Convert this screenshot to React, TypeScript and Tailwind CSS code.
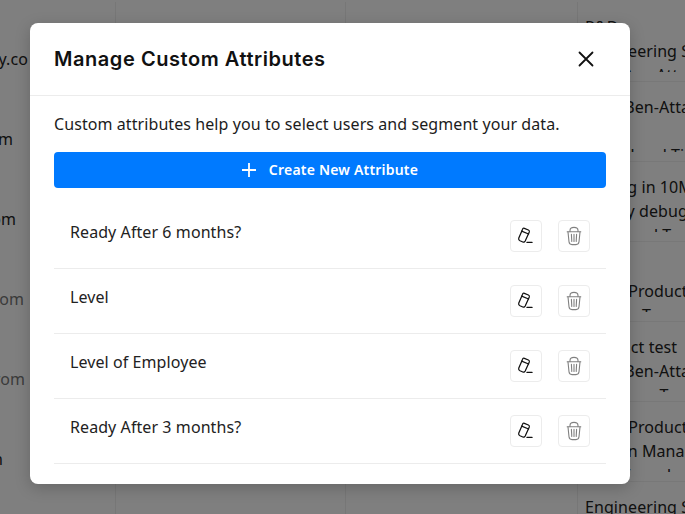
const sans = "font-['Noto_Sans',sans-serif]";

const leftCells = [
  { text: "y.co", cls: "pr-[87px]" },
  { text: "m", cls: "pr-[102px]" },
  { text: "om", cls: "pr-[99px]" },
  { text: "om", cls: "pr-[91px] text-[#777]" },
  { text: "rom", cls: "pr-[90px] text-[#777]" },
  { text: "n", cls: "pr-[112px]" },
];

const rightCells = [
  ["R&D", "Engineering Services", "Yoni Ben-Attar Team"],
  ["Dina Ben-Attar", "", "Team Lead Ti"],
  ["Tuning in 10Min", "Timely debug it", "Yoni Lead Team"],
  ["", "Sales Product", "Design Team"],
  ["Product test", "Dina Ben-Attar", "Marcoms Team"],
  ["Sales Product", "Design Manager", "Yoni Team Lead"],
  ["Engineering Services", "", ""],
];

const attributes = [
  "Ready After 6 months?",
  "Level",
  "Level of Employee",
  "Ready After 3 months?",
];

const EditIcon = () => (
  <svg width="32" height="32" viewBox="0 0 32 32" fill="none" stroke="#111" strokeWidth="1.25" strokeLinecap="round" strokeLinejoin="round">
    <path d="M12.6 9.2 Q13 7.8 14.4 8.3 L18.4 10 Q19.8 10.7 19.3 12 L15.2 21 Q14.4 22.6 12.8 22 L10 20.8 Q8.3 20 8.7 18.2 Z" />
    <path d="M11.6 11.2 L18.6 14" />
    <path d="M17 22.4 H22" strokeWidth="1.4" />
  </svg>
);

const TrashIcon = () => (
  <svg width="32" height="32" viewBox="0 0 32 32" fill="none" stroke="#808080" strokeWidth="1.1" strokeLinecap="round" strokeLinejoin="round">
    <path d="M9.2 11.8 H22.8" />
    <path d="M12 11.6 V10.4 C12 8.4 13.6 7.4 16 7.4 C18.4 7.4 20 8.4 20 10.4 V11.6" />
    <path d="M10 12 L11 21.8 C11.2 23.8 12.4 24.6 14 24.6 H18 C19.6 24.6 20.8 23.8 21 21.8 L22 12" />
    <path d="M13.4 14.4 L13.8 21.4 M16 14.4 V21.4 M18.6 14.4 L18.2 21.4" />
  </svg>
);

export default function App() {
  return (
    <div className={`relative h-[514px] w-[685px] overflow-hidden bg-white text-[16px] tracking-[0.08px] text-[#222] ${sans}`}>
      {/* Table behind the dialog */}
      <div className="grid h-full grid-cols-[116px_230px_232px_107px] pt-[2px]">
        <div className="border-r border-[#efefef]">
          {leftCells.map((c, i) => (
            <div key={i} className="flex h-[80px] justify-end overflow-hidden pt-[45px]">
              <span className={`leading-6 whitespace-nowrap ${c.cls}`}>{c.text}</span>
            </div>
          ))}
        </div>
        <div className="border-r border-[#efefef]" />
        <div className="border-r border-[#efefef]" />
        <div>
          {rightCells.map((lines, i) => (
            <div key={i} className="h-[80px] border-b border-[#f1f1f1] pt-[13px] pl-[7px] whitespace-nowrap">
              <div className="h-[57px] overflow-hidden leading-6">
                {lines.map((l, j) => (
                  <div key={j} className="h-6">{l}</div>
                ))}
              </div>
            </div>
          ))}
        </div>
      </div>

      {/* Overlay and dialog */}
      <div className="absolute inset-0 bg-black/50 pt-[23px] pl-[30px]">
        <div className="h-[461px] w-[600px] rounded-lg bg-white shadow-[0_4px_16px_rgba(0,0,0,0.2)]">
          <div className="flex h-[73px] items-center justify-between border-b border-[#ececec] pr-[34px] pl-6">
            <h2 className="font-['Inter',sans-serif] text-[20px] font-semibold tracking-[0.55px] text-[#111]">
              Manage Custom Attributes
            </h2>
            <button className="text-[#111]">
              <svg width="20" height="20" viewBox="0 0 20 20" fill="none" stroke="currentColor" strokeWidth="1.8" strokeLinecap="round" className="block">
                <path d="M3.5 3.5 L16.5 16.5 M16.5 3.5 L3.5 16.5" />
              </svg>
            </button>
          </div>
          <div className="px-6 pt-[17px]">
            <p className="leading-[22px] text-[#1c1c1c]">Custom attributes help you to select users and segment your data.</p>
            <button className="mt-[17px] flex h-9 w-full items-center justify-center gap-[13px] rounded bg-[#007aff] text-sm font-semibold tracking-[0.2px] text-white">
              <svg width="14" height="14" viewBox="0 0 14 14" fill="none" stroke="currentColor" strokeWidth="1.8" className="block">
                <path d="M7 0 V14 M0 7 H14" />
              </svg>
              Create New Attribute
            </button>
            <div className="mt-4">
              {attributes.map((name) => (
                <div key={name} className="flex h-[65px] items-center justify-between border-b border-[#ececec] px-4">
                  <span className="-mt-[8px] leading-6 text-[#222]">{name}</span>
                  <div className="flex gap-4">
                    <button className="h-8 w-8 rounded border border-[#ececec]"><div className="-m-px"><EditIcon /></div></button>
                    <button className="h-8 w-8 rounded border border-[#ececec]"><div className="-m-px"><TrashIcon /></div></button>
                  </div>
                </div>
              ))}
            </div>
          </div>
        </div>
      </div>
    </div>
  );
}
